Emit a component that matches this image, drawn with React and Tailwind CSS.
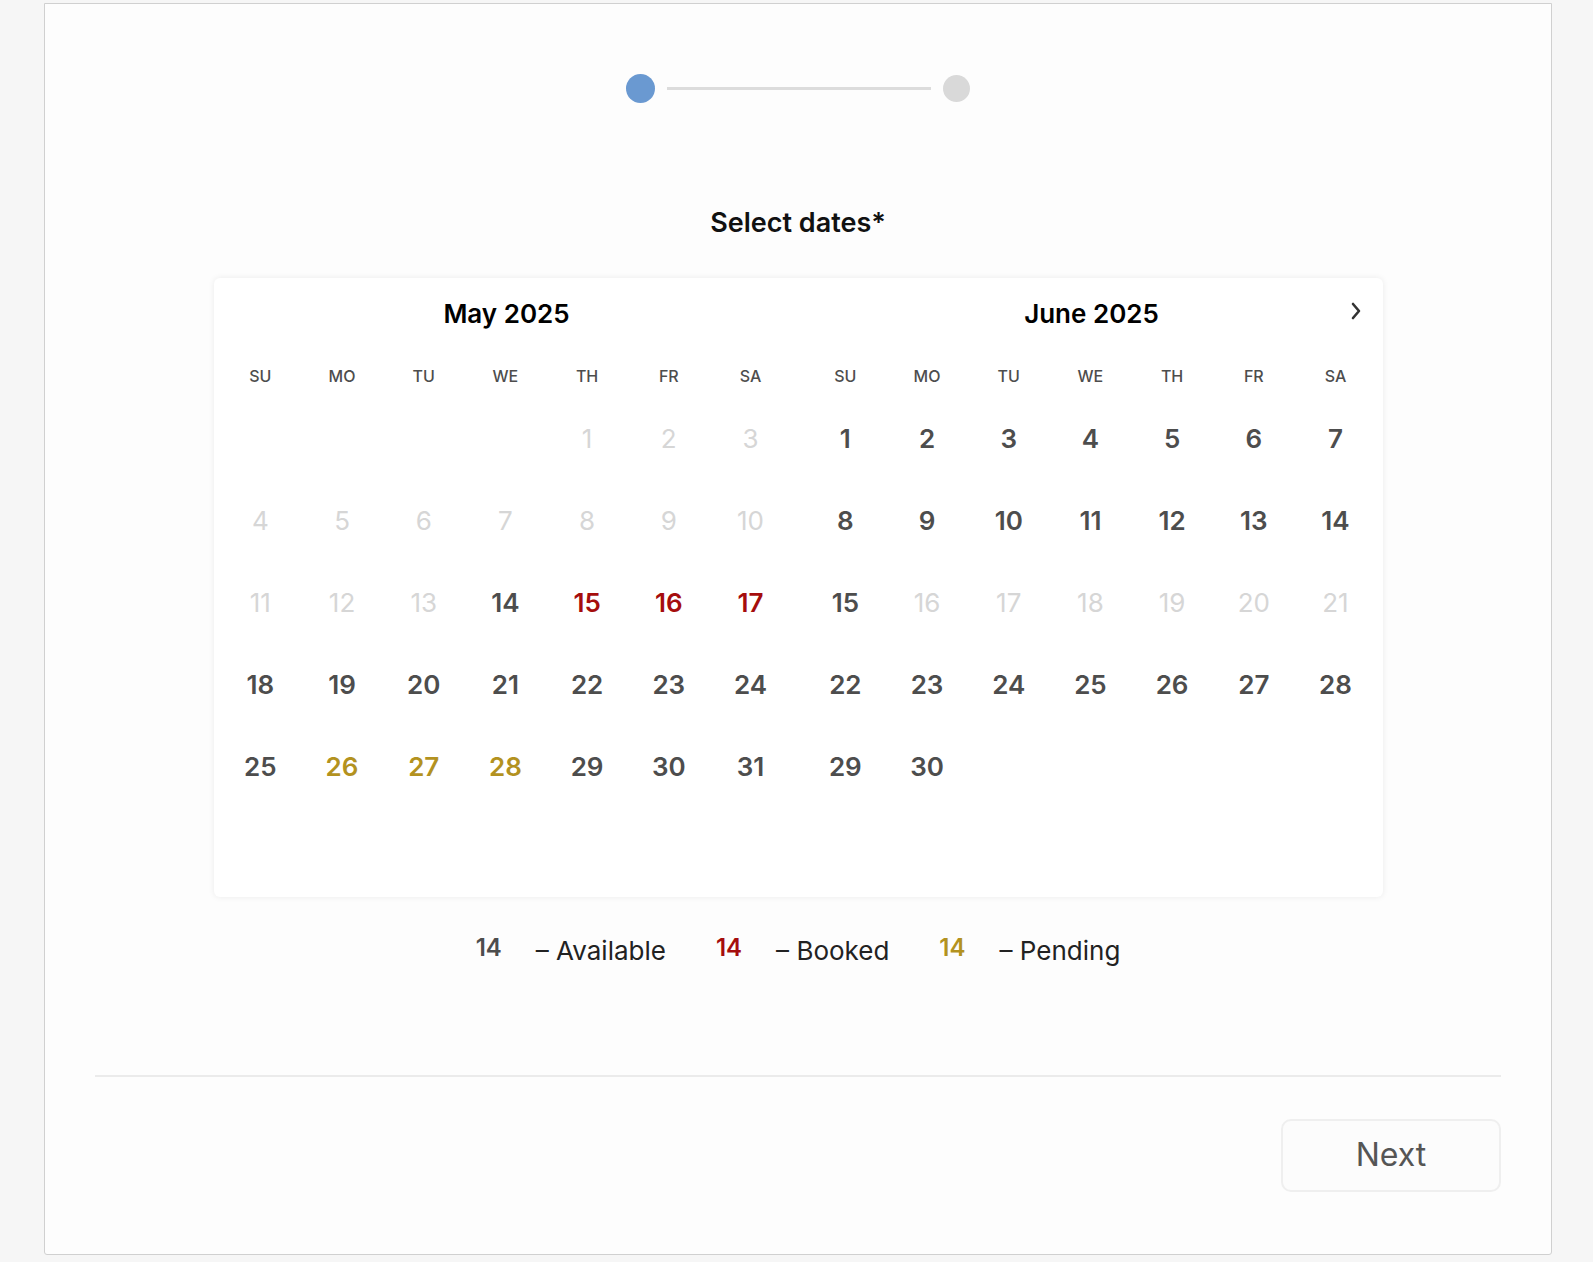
import React from 'react';

const F = { fontFamily: 'Inter, "Noto Sans", sans-serif' };

const may = {
  title: 'May 2025',
  lead: 4,
  days: 31,
  status: (d) => {
    if (d < 14) return 'off';
    if (d >= 15 && d <= 17) return 'booked';
    if (d >= 26 && d <= 28) return 'pending';
    return 'ok';
  },
};
const june = {
  title: 'June 2025',
  lead: 0,
  days: 30,
  status: (d) => (d >= 16 && d <= 21 ? 'off' : 'ok'),
};

const colors = {
  off: 'text-[#d6d6d6] font-normal',
  ok: 'text-[#4d4d4d] font-semibold',
  booked: 'text-[#a50d0d] font-semibold',
  pending: 'text-[#b3921f] font-semibold',
};

function Month({ m, chevron }) {
  const cells = [];
  for (let i = 0; i < m.lead; i++) cells.push(null);
  for (let d = 1; d <= m.days; d++) cells.push(d);
  return (
    <div className="w-[574px] relative">
      <div className="h-[72px] flex items-center justify-center text-[26px] font-semibold text-black">{m.title}</div>
      {chevron && (
        <div className="absolute right-[16px] top-[21px] text-[#333]">
          <svg width="14" height="24" viewBox="0 0 14 24"><path d="M4 5l6 7-6 7" fill="none" stroke="currentColor" strokeWidth="2.6" strokeLinecap="round" strokeLinejoin="round" /></svg>
        </div>
      )}
      <div className="grid grid-cols-[repeat(7,81.7px)] mt-[7px]">
        {['SU', 'MO', 'TU', 'WE', 'TH', 'FR', 'SA'].map((d) => (
          <div key={d} className="h-[38px] flex items-center justify-center text-[16px] font-medium text-[#4d4d4d]">{d}</div>
        ))}
      </div>
      <div className="grid grid-cols-[repeat(7,81.7px)] auto-rows-[82px] mt-[3px]">
        {cells.map((d, i) => (
          <div key={i} className={`flex items-center justify-center text-[26px] ${d ? colors[m.status(d)] : ''}`}>{d}</div>
        ))}
      </div>
    </div>
  );
}

export default function App() {
  return (
    <div style={F} className="min-h-screen bg-[#f6f6f6] pl-[44px] pr-[41px] pt-[3px] pb-[7px]">
      <div className="w-[1508px] h-[1252px] bg-[#fdfdfd] border border-[#d0d0d0] rounded-b-[3px] flex flex-col items-center">
        <div className="mt-[70px] flex items-center">
          <div className="w-[29px] h-[29px] rounded-full bg-[#6a99d1]" />
          <div className="w-[264px] h-[3px] bg-[#dcdcdc] mx-[12px]" />
          <div className="w-[27px] h-[27px] rounded-full bg-[#d9d9d9]" />
        </div>
        <div className="mt-[100px] text-[27px] font-semibold text-[#111]">Select dates*</div>
        <div className="mt-[34px] w-[1169px] h-[619px] bg-white rounded-[6px] shadow-[0_0_6px_rgba(0,0,0,0.08)] flex pl-[6px] gap-[11px]">
          <Month m={may} />
          <Month m={june} chevron />
        </div>
        <div className="mt-[34px] flex items-center text-[26px] text-[#222]">
          <span className="font-semibold text-[#4d4d4d] text-[24px] -mt-[4px]">14</span>
          <span className="ml-[34px]">– Available</span>
          <span className="ml-[50px] font-semibold text-[#a50d0d] text-[24px] -mt-[4px]">14</span>
          <span className="ml-[34px]">– Booked</span>
          <span className="ml-[50px] font-semibold text-[#b3921f] text-[24px] -mt-[4px]">14</span>
          <span className="ml-[34px]">– Pending</span>
        </div>
        <div className="mt-[105px] w-[1406px] h-[2px] bg-[#ebebeb]" />
        <div className="w-[1406px] flex justify-end mt-[42px]">
          <button className="w-[220px] h-[73px] rounded-[10px] border-2 border-[#efefef] bg-[#fcfcfc] text-[32px] text-[#555]">Next</button>
        </div>
      </div>
    </div>
  );
}
